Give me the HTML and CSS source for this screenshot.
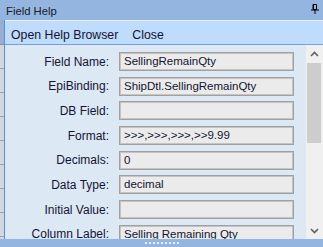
FILE: index.html
```html
<!DOCTYPE html>
<html lang="en">

<head>
    <meta charset="UTF-8">
    <meta name="viewport" content="width=device-width, initial-scale=1.0">
    <title>Field Help</title>
    <link rel="stylesheet" href="styles.css">
</head>

<body>
    <div class="titlebar">
        <span class="title">Field Help</span>
        <svg class="pin" width="8" height="10" viewBox="0 0 8 10">
            <path d="M2 0.5h3.5v5h-3.5z M2.5 0.5v5" fill="none" stroke="#000" stroke-width="1"/>
            <path d="M0 6h8" stroke="#000" stroke-width="1"/>
            <path d="M4 6v4" stroke="#000" stroke-width="1"/>
        </svg>
    </div>
    <div class="main">
        <div class="side">
            <div class="side-top"></div>
            <div class="side-rows"></div>
        </div>
        <div class="panel">
            <div class="menubar">
                <span class="menu-item">Open Help Browser</span>
                <span class="menu-item">Close</span>
            </div>
            <div class="body">
                <div class="form">
                    <div class="row">
                        <label>Field Name:</label>
                        <div class="box">SellingRemainQty</div>
                    </div>
                    <div class="row">
                        <label>EpiBinding:</label>
                        <div class="box">ShipDtl.SellingRemainQty</div>
                    </div>
                    <div class="row">
                        <label>DB Field:</label>
                        <div class="box"></div>
                    </div>
                    <div class="row">
                        <label>Format:</label>
                        <div class="box">&gt;&gt;&gt;,&gt;&gt;&gt;,&gt;&gt;&gt;,&gt;&gt;9.99</div>
                    </div>
                    <div class="row">
                        <label>Decimals:</label>
                        <div class="box">0</div>
                    </div>
                    <div class="row">
                        <label>Data Type:</label>
                        <div class="box">decimal</div>
                    </div>
                    <div class="row">
                        <label>Initial Value:</label>
                        <div class="box"></div>
                    </div>
                    <div class="row">
                        <label>Column Label:</label>
                        <div class="box">Selling Remaining Qty</div>
                    </div>
                </div>
                <div class="scrollbar">
                    <div class="arrow">
                        <svg width="9" height="6" viewBox="0 0 9 6"><path d="M1 5l3.5-3.5L8 5" fill="none" stroke="#606060" stroke-width="1.6"/></svg>
                    </div>
                    <div class="thumb"></div>
                    <div class="track"></div>
                    <div class="arrow">
                        <svg width="9" height="6" viewBox="0 0 9 6"><path d="M1 1l3.5 3.5L8 1" fill="none" stroke="#606060" stroke-width="1.6"/></svg>
                    </div>
                </div>
            </div>
        </div>
    </div>
    <div class="grip">
        <span class="dots"></span>
    </div>
</body>

</html>
```

FILE: styles.css
```css
body {
    font-family: "Liberation Sans", Arial, sans-serif;
    margin: 0;
    padding: 0;
    width: 323px;
    height: 247px;
    overflow: hidden;
    background: #dde8f5;
    color: #141432;
}

.titlebar {
    height: 20px;
    background: #95b5e1;
    display: flex;
    align-items: center;
    justify-content: space-between;
    padding: 0 4px 0 6px;
    box-sizing: border-box;
}

.title {
    font-size: 11.3px;
    color: #1a1a2a;
    margin-top: 1px;
}

.pin {
    margin-top: -2px;
}

.main {
    display: flex;
    height: 219px;
}

.side {
    width: 4px;
    display: flex;
    flex-direction: column;
    background: #c9d1db;
}

.side-top {
    height: 24px;
    background: #98aed0;
    border-bottom: 1px solid #7b8fae;
}

.side-rows {
    flex: 1;
    background: repeating-linear-gradient(to bottom, #d4d8de 0, #d4d8de 23px, #9aa2ac 23px, #9aa2ac 24px);
}

.panel {
    flex: 1;
    display: flex;
    flex-direction: column;
    border-left: 1px solid #5a8fe0;
    min-height: 0;
}

.menubar {
    height: 23px;
    flex-shrink: 0;
    box-sizing: content-box;
    background: #bfdcfc;
    border-top: 1px solid #e6f0fc;
    border-bottom: 1px solid #78a0d8;
    display: flex;
    align-items: center;
    gap: 14px;
    padding-left: 6px;
    padding-top: 0;
    font-size: 12.3px;
}

.menu-item {
    margin-top: 4px;
}

.body {
    flex: 1;
    display: flex;
    min-height: 0;
}

.form {
    flex: 1;
    display: flex;
    flex-direction: column;
    gap: 5.7px;
    padding-top: 7px;
    overflow: hidden;
}

.row {
    display: flex;
    align-items: center;
    gap: 10px;
    flex-shrink: 0;
}

label {
    width: 104px;
    text-align: right;
    font-size: 12px;
}

.box {
    width: 175px;
    height: 19px;
    box-sizing: border-box;
    background: #ebebeb;
    border: 1px solid #a0a0a0;
    box-shadow: inset 0 0 0 1px #c4c4c4;
    font-size: 11.5px;
    line-height: 17px;
    padding-left: 4px;
    white-space: nowrap;
    overflow: hidden;
}

.scrollbar {
    width: 17px;
    display: flex;
    flex-direction: column;
    background: #f0f0f0;
    margin-left: 12px;
}

.arrow {
    height: 17px;
    display: flex;
    align-items: center;
    justify-content: center;
}

.thumb {
    height: 80px;
    margin: 1px 2px 0 1px;
    background: #cdcdcd;
}

.track {
    flex: 1;
}

.grip {
    height: 8px;
    background: #95b5e1;
    display: flex;
    justify-content: center;
    align-items: center;
}

.dots {
    width: 36px;
    height: 2px;
    margin-left: 2px;
    background: repeating-linear-gradient(to right, #e8f0fc 0, #e8f0fc 2px, transparent 2px, transparent 4px);
}
```
